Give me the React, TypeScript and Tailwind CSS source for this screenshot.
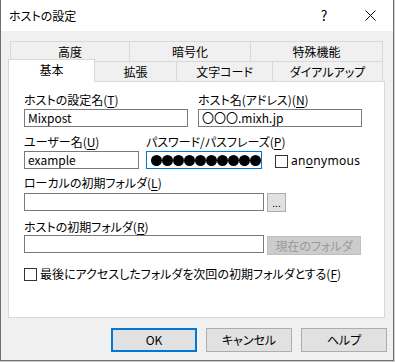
import React from "react";

const font = "[font-family:'Noto_Sans_CJK_JP','Noto_Sans',sans-serif] [font-feature-settings:'palt']";

function Acc({ k }: { k: string }) {
  return (
    <span>
      (<span className="underline underline-offset-2">{k}</span>)
    </span>
  );
}

function Label({ children }: { children: React.ReactNode }) {
  return <div className="h-[14px] leading-[14px] text-[12px] text-black whitespace-nowrap">{children}</div>;
}

function Input({ w, value, active }: { w: string; value?: string; active?: boolean }) {
  return (
    <div
      className={`${w} h-[18px] bg-white border ${active ? "border-[#0078d7]" : "border-[#7a7a7a]"} flex items-center px-[3px] text-[12px] leading-[14px] overflow-hidden whitespace-nowrap`}
    >
      {value}
    </div>
  );
}

function Checkbox() {
  return <div className="w-[13px] h-[13px] border border-[#333333] bg-white shrink-0" />;
}

export default function App() {
  const backTabs = [
    { label: "高度", w: "w-[120px]" },
    { label: "暗号化", w: "w-[121px]" },
    { label: "特殊機能", w: "w-[132px]" },
  ];
  const frontTabs = [
    { label: "拡張", w: "w-[82px]" },
    { label: "文字コード", w: "w-[96px]" },
    { label: "ダイアルアップ", w: "w-[110px]" },
  ];

  return (
    <div className={`w-[395px] h-[362px] bg-[#cfcfcf] ${font}`}>
      <div className="w-[394px] h-[361px] bg-[#f0f0f0] border border-t-0 border-[#6f6f6f] flex flex-col">
        {/* title bar */}
        <div className="h-[31px] bg-white flex items-center shrink-0">
          <span className="pl-[8px] text-[12px] leading-[14px] text-black">ホストの設定</span>
          <div className="ml-auto flex h-full">
            <div className="w-[46px] h-full flex items-center justify-center text-[14px] text-black">?</div>
            <div className="w-[46px] h-full flex items-center justify-center">
              <svg width="11" height="11" viewBox="0 0 11 11">
                <path d="M0.5 0.5 L10.5 10.5 M10.5 0.5 L0.5 10.5" stroke="#000" strokeWidth="1" />
              </svg>
            </div>
          </div>
        </div>

        {/* tabs back row */}
        <div className="ml-[9px] mt-[10px] flex h-[20px]">
          {backTabs.map((t, i) => (
            <div
              key={t.label}
              className={`${t.w} h-[20px] border-t border-r ${i === 0 ? "border-l" : ""} border-[#d9d9d9] flex items-center justify-center text-[12px] leading-[14px]`}
            >
              {t.label}
            </div>
          ))}
        </div>

        {/* tabs front row */}
        <div className="ml-[7px] -mt-[2px] flex items-end h-[22px]">
          <div className="relative z-10 w-[87px] h-[23px] -mb-[1px] bg-white border-t border-l border-r border-[#d9d9d9] flex items-start justify-center pt-[3px] text-[12px] leading-[14px]">
            基本
          </div>
          {frontTabs.map((t) => (
            <div
              key={t.label}
              className={`${t.w} h-[20px] border-t border-r border-[#d9d9d9] flex items-center justify-center text-[12px] leading-[14px]`}
            >
              {t.label}
            </div>
          ))}
        </div>

        {/* panel */}
        <div className="ml-[7px] w-[377px] h-[237px] bg-white border border-[#d9d9d9] pl-[15px] pt-[11px] shrink-0">
          {/* row 1 */}
          <div className="flex gap-[10px]">
            <div className="w-[164px] flex flex-col gap-[2px]">
              <Label>
                ホストの設定名<Acc k="T" />
              </Label>
              <Input w="w-[164px]" value="Mixpost" />
            </div>
            <div className="w-[164px] flex flex-col gap-[2px]">
              <Label>
                ホスト名(アドレス)<Acc k="N" />
              </Label>
              <Input w="w-[164px]" value="〇〇〇.mixh.jp" />
            </div>
          </div>

          {/* row 2 */}
          <div className="flex mt-[8px]">
            <div className="w-[115px] flex flex-col gap-[2px]">
              <Label>
                ユーザー名<Acc k="U" />
              </Label>
              <Input w="w-[115px]" value="example" />
            </div>
            <div className="w-[116px] flex flex-col gap-[2px] ml-[7px]">
              <Label>
                パスワード/パスフレーズ<Acc k="P" />
              </Label>
              <div className="w-[116px] h-[18px] bg-white border border-[#0078d7] flex items-center pl-[4px] overflow-hidden">
                {Array.from({ length: 10 }).map((_, i) => (
                  <span key={i} className="w-[11px] h-[11px] rounded-full bg-black shrink-0" />
                ))}
              </div>
            </div>
            <div className="flex items-end ml-[13px] pb-[1px]">
              <div className="flex items-center gap-[3px]">
                <Checkbox />
                <span className="text-[12px] leading-[14px] tracking-[0.3px] [font-family:'Noto_Sans',sans-serif]">
                  an<span className="underline underline-offset-2">o</span>nymous
                </span>
              </div>
            </div>
          </div>

          {/* row 3 */}
          <div className="mt-[7px]">
            <Label>
              ローカルの初期フォルダ<Acc k="L" />
            </Label>
            <div className="flex items-start gap-[3px] mt-[3px]">
              <Input w="w-[240px]" />
              <div className="w-[19px] h-[19px] bg-[#e1e1e1] border border-[#adadad] flex items-end justify-center text-[10px] leading-[12px] pb-[2px]">
                ...
              </div>
            </div>
          </div>

          {/* row 4 */}
          <div className="mt-[8px]">
            <Label>
              ホストの初期フォルダ<Acc k="R" />
            </Label>
            <div className="flex items-start gap-[3px] mt-[1px]">
              <Input w="w-[240px]" />
              <div className="mt-[1px] w-[94px] h-[19px] bg-[#cccccc] border border-[#bfbfbf] flex items-center justify-center text-[12px] leading-[14px] text-[#9a9a9a]">
                現在のフォルダ
              </div>
            </div>
          </div>

          {/* row 5 */}
          <div className="mt-[12px] flex items-center gap-[3px]">
            <Checkbox />
            <span className="text-[12px] leading-[14px]">
              最後にアクセスしたフォルダを次回の初期フォルダとする<Acc k="F" />
            </span>
          </div>
        </div>

        {/* buttons */}
        <div className="flex gap-[9px] ml-[110px] mt-[10px]">
          <div className="w-[86px] h-[24px] bg-[#e1e1e1] border-2 border-[#0078d7] flex items-center justify-center text-[12px] leading-[14px]">
            OK
          </div>
          <div className="w-[86px] h-[24px] bg-[#e1e1e1] border border-[#adadad] flex items-center justify-center text-[12px] leading-[14px]">
            キャンセル
          </div>
          <div className="w-[86px] h-[24px] bg-[#e1e1e1] border border-[#adadad] flex items-center justify-center text-[12px] leading-[14px]">
            ヘルプ
          </div>
        </div>
      </div>
    </div>
  );
}
